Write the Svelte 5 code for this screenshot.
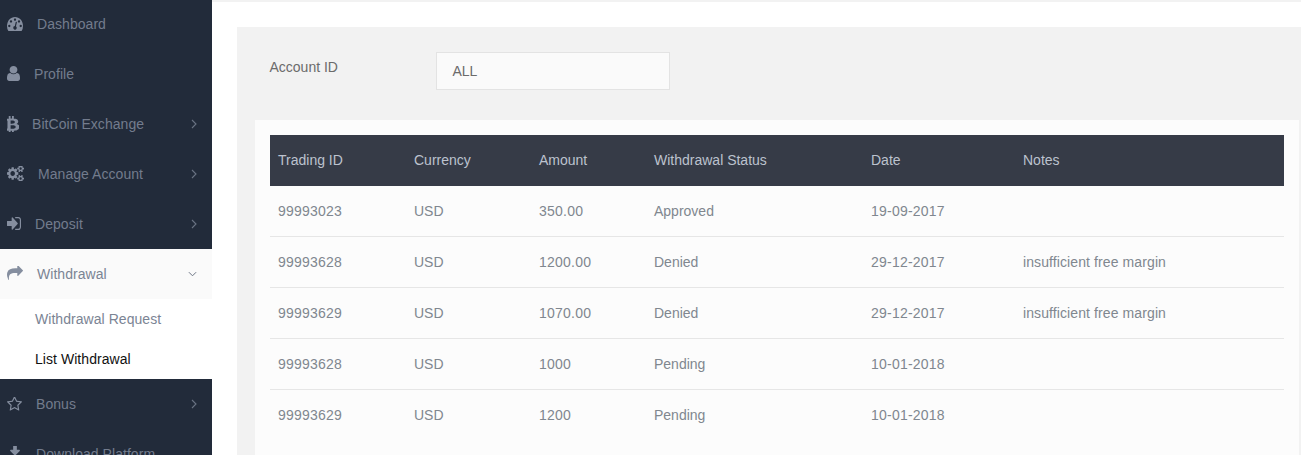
<script>
	const menu = [
		{ label: 'Dashboard', w: 16, h: 14, box: '0 256 1792 1408', d: 'M384 1152q0-53-37.5-90.5t-90.5-37.5-90.5 37.5-37.5 90.5 37.5 90.5 90.5 37.5 90.5-37.5 37.5-90.5zm192-448q0-53-37.5-90.5t-90.5-37.5-90.5 37.5-37.5 90.5 37.5 90.5 90.5 37.5 90.5-37.5 37.5-90.5zm428 481l101-382q6-26-7.5-48.5t-38.5-29.5-48 6.5-30 39.5l-101 382q-60 5-107 43.5t-63 98.5q-20 77 20 146t117 89 146-20 89-117q16-60-6-117t-72-91zm660-33q0-53-37.5-90.5t-90.5-37.5-90.5 37.5-37.5 90.5 37.5 90.5 90.5 37.5 90.5-37.5 37.5-90.5zm-640-640q0-53-37.5-90.5t-90.5-37.5-90.5 37.5-37.5 90.5 37.5 90.5 90.5 37.5 90.5-37.5 37.5-90.5zm448 192q0-53-37.5-90.5t-90.5-37.5-90.5 37.5-37.5 90.5 37.5 90.5 90.5 37.5 90.5-37.5 37.5-90.5zm320 448q0 261-141 483-19 29-54 29h-1402q-35 0-54-29-141-221-141-483 0-182 71-348t191-286 286-191 348-71 348 71 286 191 191 286 71 348z' },
		{ label: 'Profile', w: 13, h: 15, box: '256 128 1280 1536', d: 'M1536 1399q0 109-62.5 187t-150.5 78h-854q-88 0-150.5-78t-62.5-187q0-85 8.5-160.5t31.5-152 58.5-131 94-89 134.5-34.5q131 128 313 128t313-128q76 0 134.5 34.5t94 89 58.5 131 31.5 152 8.5 160.5zm-256-887q0 159-112.5 271.5t-271.5 112.5-271.5-112.5-112.5-271.5 112.5-271.5 271.5-112.5 271.5 112.5 112.5 271.5z' },
		{ label: 'BitCoin Exchange', w: 12, h: 16, tight: true, box: '216 128 1020 1536', arrow: true, d: 'M1167 640q18 182-131 258 117 28 175 103t45 214q-7 71-32.5 125t-64.5 89-97 58.5-121.5 34.5-145.5 15v255h-154v-251q-80 0-122-1v252h-154v-255q-18 0-54-.5t-55-.5h-200l31-183h111q50 0 58-51v-402h16q-6-1-16-1v-287q-13-68-89-68h-111v-164l212 1q64 0 97-1v-252h154v247q82-2 122-2v-245h154v252q79 7 140 22.5t113 45 82.5 78 36.5 114.5zm-215 545q0-36-15-64t-37-46-57.5-30.5-65.5-18.5-74-9-69-3-64.5 1-47.5 1v338q8 0 37 .5t48 .5 53-1.5 58.5-4 57-8.5 55.5-14 47.5-21 39.5-30 24.5-40 9.5-51zm-71-476q0-33-12.5-58.5t-30.5-42-48-28-55-16.5-61.5-8-58-2.5-54 1-39.5.5v307q5 0 34.5.5t46.5 0 50-2 55-5.5 51.5-11 48.5-18.5 37-27 27-38.5 9-51z' },
		{ label: 'Manage Account', w: 17, h: 15, box: '0 128 1920 1536', arrow: true, d: 'M896 896q0-106-75-181t-181-75-181 75-75 181 75 181 181 75 181-75 75-181zm768 512q0-52-38-90t-90-38-90 38-38 90q0 53 37.5 90.5t90.5 37.5 90.5-37.5 37.5-90.5zm0-1024q0-52-38-90t-90-38-90 38-38 90q0 53 37.5 90.5t90.5 37.5 90.5-37.5 37.5-90.5zm-384 421v185q0 10-7 19.5t-16 10.5l-155 24q-11 35-32 76 34 48 90 115 7 11 7 20 0 12-7 19-23 30-82.5 89.5t-78.5 59.5q-11 0-21-7l-115-90q-37 19-77 31-11 108-23 155-7 24-30 24h-186q-11 0-20-7.5t-10-17.5l-23-153q-34-10-75-31l-118 89q-7 7-20 7-11 0-21-8-144-133-144-160 0-9 7-19 10-14 41-53t47-61q-23-44-35-82l-152-24q-10-1-17-9.5t-7-19.5v-185q0-10 7-19.5t16-10.5l155-24q11-35 32-76-34-48-90-115-7-11-7-20 0-12 7-20 22-30 82-89t79-59q11 0 21 7l115 90q34-18 77-32 11-108 23-154 7-24 30-24h186q11 0 20 7.5t10 17.5l23 153q34 10 75 31l118-89q8-7 20-7 11 0 21 8 144 133 144 160 0 8-7 19-12 16-42 54t-45 60q23 48 34 82l152 23q10 2 17 10.5t7 19.5zm640 533v140q0 16-149 31-12 27-30 52 51 113 51 138 0 4-4 7-122 71-124 71-8 0-46-47t-52-68q-20 2-30 2t-30-2q-14 21-52 68t-46 47q-2 0-124-71-4-3-4-7 0-25 51-138-18-25-30-52-149-15-149-31v-140q0-16 149-31 13-29 30-52-51-113-51-138 0-4 4-7 4-2 35-20t59-34 30-16q8 0 46 46.5t52 67.5q20-2 30-2t30 2q51-71 92-112l6-2q4 0 124 70 4 3 4 7 0 25-51 138 17 23 30 52 149 15 149 31zm0-1024v140q0 16-149 31-12 27-30 52 51 113 51 138 0 4-4 7-122 71-124 71-8 0-46-47t-52-68q-20 2-30 2t-30-2q-14 21-52 68t-46 47q-2 0-124-71-4-3-4-7 0-25 51-138-18-25-30-52-149-15-149-31v-140q0-16 149-31 13-29 30-52-51-113-51-138 0-4 4-7 4-2 35-20t59-34 30-16q8 0 46 46.5t52 67.5q20-2 30-2t30 2q51-71 92-112l6-2q4 0 124 70 4 3 4 7 0 25-51 138 17 23 30 52 149 15 149 31z' },
		{ label: 'Deposit', w: 14, h: 13, box: '128 256 1536 1280', arrow: true, d: 'M1312 896q0 26-19 45l-544 544q-19 19-45 19t-45-19-19-45v-288h-448q-26 0-45-19t-19-45v-384q0-26 19-45t45-19h448v-288q0-26 19-45t45-19 45 19l544 544q19 19 19 45zm352-352v704q0 119-84.5 203.5t-203.5 84.5h-320q-13 0-22.5-9.5t-9.5-22.5q0-4-1-20t-.5-26.5 3-23.5 10-19.5 20.5-6.5h320q66 0 113-47t47-113v-704q0-66-47-113t-113-47h-312l-11.5-1-11.5-3-8-5.5-7-9-2-13.5q0-4-1-20t-.5-26.5 3-23.5 10-19.5 20.5-6.5h320q119 0 203.5 84.5t84.5 203.5z' },
		{ label: 'Withdrawal', w: 16, h: 14, raised: true, box: '0 128 1792 1536', open: true, d: 'M1792 640q0 26-19 45l-512 512q-19 19-45 19t-45-19-19-45v-256h-224q-98 0-175.5 6t-154 21.5-133 42.5-105.5 69.5-80 101-48.5 138.5-17.5 181q0 55 5 123 0 6 2.5 23.5t2.5 26.5q0 15-8.5 25t-23.5 10q-16 0-28-17-7-9-13-22t-13.5-30-10.5-24q-127-285-127-451 0-199 53-333 162-403 875-403h224v-256q0-26 19-45t45-19 45 19l512 512q19 19 19 45z' },
		{ label: 'Bonus', w: 15, h: 14, box: '64 128 1664 1536', arrow: true, d: 'M1201 1004l306-297-422-62-189-382-189 382-422 62 306 297-73 421 378-199 377 199zm527-357q0 22-26 48l-363 354 86 500q1 7 1 20 0 50-41 50-19 0-40-12l-449-236-449 236q-22 12-40 12-21 0-31.5-14.5t-10.5-35.5q0-6 2-20l86-500-364-354q-25-27-25-48 0-37 56-46l502-73 225-455q19-41 49-41t49 41l225 455 502 73q56 9 56 46z' },
		{ label: 'Download Platform', w: 16, h: 14, tight: true, raised: true, box: '64 128 1664 1408', d: 'M1344 1344q0-26-19-45t-45-19-45 19-19 45 19 45 45 19 45-19 19-45zm256 0q0-26-19-45t-45-19-45 19-19 45 19 45 45 19 45-19 19-45zm128-224v320q0 40-28 68t-68 28h-1472q-40 0-68-28t-28-68v-320q0-40 28-68t68-28h465l135 136q58 56 136 56t136-56l136-136h464q40 0 68 28t28 68zm-325-569q17 41-14 70l-448 448q-18 19-45 19t-45-19l-448-448q-31-29-14-70 17-39 59-39h256v-448q0-26 19-45t45-19h256q26 0 45 19t19 45v448h256q42 0 59 39z' }
	];

	const rows = [
		['99993023', 'USD', '350.00', 'Approved', '19-09-2017', ''],
		['99993628', 'USD', '1200.00', 'Denied', '29-12-2017', 'insufficient free margin'],
		['99993629', 'USD', '1070.00', 'Denied', '29-12-2017', 'insufficient free margin'],
		['99993628', 'USD', '1000', 'Pending', '10-01-2018', ''],
		['99993629', 'USD', '1200', 'Pending', '10-01-2018', '']
	];
</script>

<div class="page">
	<aside class="sidebar">
		{#each menu as item}
			<a href="#top" class="item" class:open={item.open}>
				<svg class="icon" class:tight={item.tight} class:raised={item.raised} width={item.w} height={item.h} viewBox={item.box} preserveAspectRatio="none"><path d={item.d} fill="currentColor" /></svg>
				<span class="label">{item.label}</span>
				{#if item.arrow}
					<svg class="chev" width="6" height="10" viewBox="0 0 6 10"><path d="M1 1l4 4-4 4" fill="none" stroke="currentColor" stroke-width="1.1" /></svg>
				{:else if item.open}
					<svg class="chev" width="9" height="6" viewBox="0 0 10 6"><path d="M1 1l4 4 4-4" fill="none" stroke="currentColor" stroke-width="1.1" /></svg>
				{/if}
			</a>
			{#if item.open}
				<div class="submenu">
					<a href="#top">Withdrawal Request</a>
					<a href="#top" class="current">List Withdrawal</a>
				</div>
			{/if}
		{/each}
	</aside>

	<main class="main">
		<section class="panel">
			<div class="filter">
				<span class="filter-label">Account ID</span>
				<div class="select">ALL</div>
			</div>
			<div class="card">
				<table>
					<thead>
						<tr>
							<th class="c1">Trading ID</th>
							<th class="c2">Currency</th>
							<th class="c3">Amount</th>
							<th class="c4">Withdrawal Status</th>
							<th class="c5">Date</th>
							<th>Notes</th>
						</tr>
					</thead>
					<tbody>
						{#each rows as row}
							<tr>
								{#each row as cell}
									<td>{cell}</td>
								{/each}
							</tr>
						{/each}
					</tbody>
				</table>
			</div>
		</section>
	</main>
</div>

<style>
	:global(body) {
		margin: 0;
		background: #fff;
	}

	.page {
		display: flex;
		height: 455px;
		overflow: hidden;
		font-family: 'Liberation Sans', Arial, sans-serif;
		font-size: 14px;
	}

	.sidebar {
		flex: 0 0 212px;
		margin-top: -1px;
		background: #222b3a;
	}

	.item {
		display: flex;
		align-items: center;
		gap: 14px;
		box-sizing: border-box;
		height: 50px;
		padding: 0 15px 0 7px;
		color: #737c8d;
		letter-spacing: 0.05px;
		text-decoration: none;
	}

	.icon {
		flex: none;
		margin-top: -1px;
		color: #858e9f;
	}

	.icon.tight {
		margin-right: -1px;
	}

	.icon.raised {
		margin-top: -3px;
	}

	.label {
		flex: 1;
	}

	.chev {
		flex: none;
		color: #6a7383;
	}

	.item.open {
		background: #fafafa;
		color: #7b8494;
	}

	.submenu {
		background: #fff;
	}

	.submenu a {
		display: flex;
		align-items: center;
		height: 40px;
		padding-left: 35px;
		color: #7b8494;
		letter-spacing: 0.05px;
		text-decoration: none;
	}

	.submenu a.current {
		color: #111;
	}

	.main {
		flex: 1;
		min-width: 0;
		border-top: 2px solid #f2f2f2;
	}

	.panel {
		margin: 25px 0 0 25px;
		padding: 25px 2px 0 18px;
		background: #f2f2f2;
		height: 500px;
	}

	.filter {
		display: flex;
		align-items: flex-start;
		padding-left: 14.5px;
		margin-bottom: 30px;
	}

	.filter-label {
		width: 166.5px;
		margin-top: 7px;
		line-height: 16px;
		color: #6b6b6b;
	}

	.select {
		box-sizing: border-box;
		width: 234px;
		height: 38px;
		padding: 0 15.5px;
		line-height: 36px;
		background: #fafafa;
		border: 1px solid #e3e3e3;
		color: #6b6b6b;
	}

	.card {
		padding: 15px;
		background: #fcfcfc;
		height: 400px;
	}

	table {
		width: 100%;
		table-layout: fixed;
		border-collapse: collapse;
	}

	th {
		height: 49px;
		padding: 0 8px 2px;
		text-align: left;
		font-weight: normal;
		background: #363b47;
		color: #bcc2ce;
	}

	.c1 { width: 120px; }
	.c2 { width: 109px; }
	.c3 { width: 99px; }
	.c4 { width: 201px; }
	.c5 { width: 136px; }

	td {
		height: 50px;
		padding: 0 8px;
		border-bottom: 1px solid #e6e6e6;
		color: #80878f;
	}

	td:nth-child(1),
	td:nth-child(3),
	td:nth-child(5) {
		letter-spacing: 0.22px;
	}

	td:nth-child(6) {
		letter-spacing: 0.1px;
	}

	tr:last-child td {
		border-bottom: 0;
	}
</style>
